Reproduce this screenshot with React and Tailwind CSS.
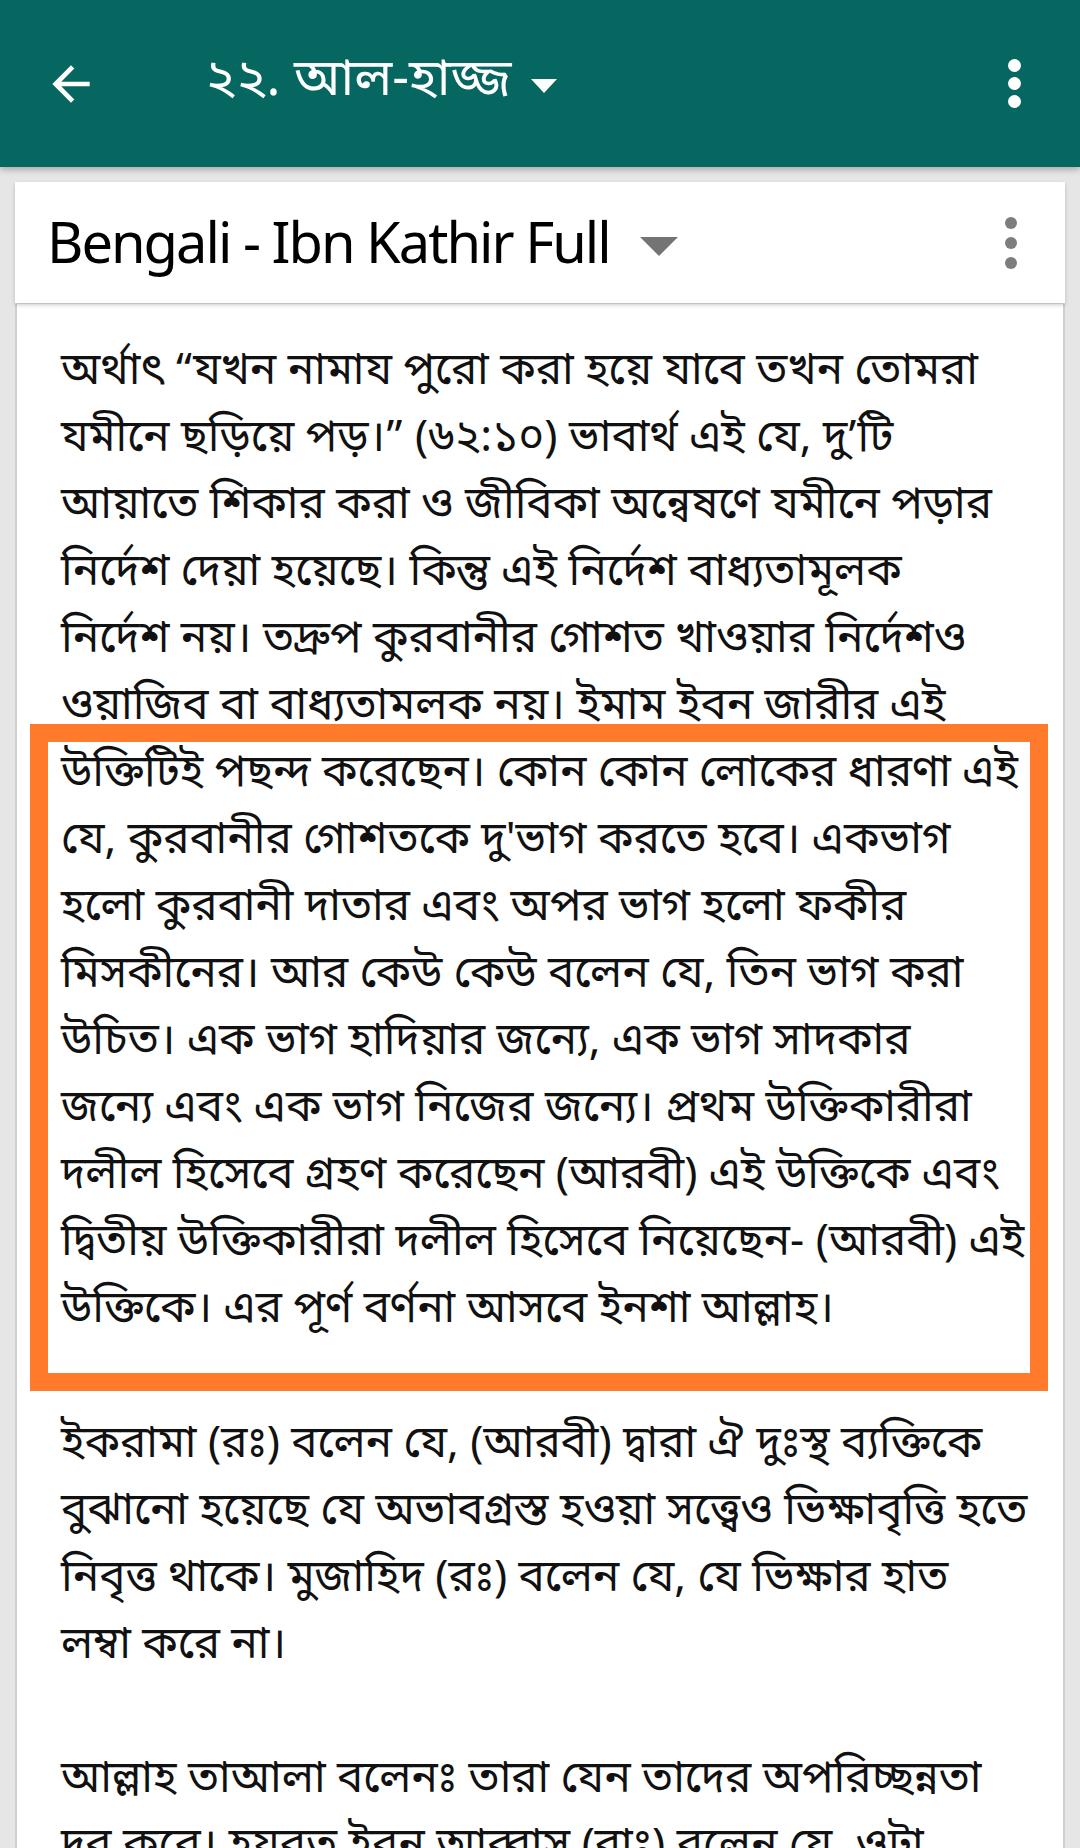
import React from 'react';

const bn = { fontFamily: '"Noto Sans Bengali", "Noto Serif Bengali", "Lohit Bengali", "FreeSerif", "FreeSans", sans-serif' };

const para1 = [
  'অর্থাৎ “যখন নামায পুরো করা হয়ে যাবে তখন তোমরা',
  'যমীনে ছড়িয়ে পড়।” (৬২:১০) ভাবার্থ এই যে, দু’টি',
  'আয়াতে শিকার করা ও জীবিকা অন্বেষণে যমীনে পড়ার',
  'নির্দেশ দেয়া হয়েছে। কিন্তু এই নির্দেশ বাধ্যতামূলক',
  'নির্দেশ নয়। তদ্রুপ কুরবানীর গোশত খাওয়ার নির্দেশও',
  'ওয়াজিব বা বাধ্যতামলক নয়। ইমাম ইবন জারীর এই',
];

const boxed = [
  'উক্তিটিই পছন্দ করেছেন। কোন কোন লোকের ধারণা এই',
  "যে, কুরবানীর গোশতকে দু'ভাগ করতে হবে। একভাগ",
  'হলো কুরবানী দাতার এবং অপর ভাগ হলো ফকীর',
  'মিসকীনের। আর কেউ কেউ বলেন যে, তিন ভাগ করা',
  'উচিত। এক ভাগ হাদিয়ার জন্যে, এক ভাগ সাদকার',
  'জন্যে এবং এক ভাগ নিজের জন্যে। প্রথম উক্তিকারীরা',
  'দলীল হিসেবে গ্রহণ করেছেন (আরবী) এই উক্তিকে এবং',
  'দ্বিতীয় উক্তিকারীরা দলীল হিসেবে নিয়েছেন- (আরবী) এই',
  'উক্তিকে। এর পূর্ণ বর্ণনা আসবে ইনশা আল্লাহ।',
];

const para2 = [
  'ইকরামা (রঃ) বলেন যে, (আরবী) দ্বারা ঐ দুঃস্থ ব্যক্তিকে',
  'বুঝানো হয়েছে যে অভাবগ্রস্ত হওয়া সত্ত্বেও ভিক্ষাবৃত্তি হতে',
  'নিবৃত্ত থাকে। মুজাহিদ (রঃ) বলেন যে, যে ভিক্ষার হাত',
  'লম্বা করে না।',
];

const para3 = [
  'আল্লাহ তাআলা বলেনঃ তারা যেন তাদের অপরিচ্ছন্নতা',
  'দূর করে। হযরত ইবন আব্বাস (রাঃ) বলেন যে, ওটা',
];

const Line = ({ children }) => (
  <div className="h-[67px] leading-[67px] whitespace-nowrap text-[44px] text-[#111]" style={bn}>
    {children}
  </div>
);

const Dots = ({ color, size, gap }) => (
  <div className={`flex flex-col items-center ${gap}`}>
    <span className={`${size} rounded-full ${color}`} />
    <span className={`${size} rounded-full ${color}`} />
    <span className={`${size} rounded-full ${color}`} />
  </div>
);

export default function App() {
  return (
    <div className="w-[1080px] h-[1848px] overflow-hidden bg-[#e6e6e6]">
      <header className="relative z-10 h-[167px] bg-[#05675f] flex items-center shadow-[0_3px_6px_rgba(0,0,0,0.25)]">
        <svg className="ml-[43px]" width="56" height="56" viewBox="0 0 24 24" fill="#fff">
          <path d="M20 11H7.83l5.59-5.59L12 4l-8 8 8 8 1.41-1.41L7.83 13H20v-2z" />
        </svg>
        <div className="ml-[106px] flex items-center">
          <span className="text-[52px] leading-none text-white pb-[4px]" style={bn}>২২. আল-হাজ্জ</span>
          <svg className="ml-[20px] mt-[4px]" width="26" height="14" viewBox="0 0 26 14" fill="#fff">
            <path d="M0 0h26L13 14z" />
          </svg>
        </div>
        <div className="ml-auto mr-[59px]">
          <Dots color="bg-white" size="w-[13px] h-[13px]" gap="gap-[5px]" />
        </div>
      </header>

      <main className="px-[15px] pt-[15px]">
        <div className="relative z-[5] h-[121px] bg-white flex items-center shadow-[0_2px_4px_rgba(0,0,0,0.2)]">
          <span
            className="ml-[32px] text-[56px] leading-none tracking-[-2px] text-black pb-[4px]"
            style={{ fontFamily: '"Noto Sans", "Open Sans", sans-serif' }}
          >
            Bengali - Ibn Kathir Full
          </span>
          <svg className="ml-[30px] mt-[8px]" width="38" height="19" viewBox="0 0 38 19" fill="#747474">
            <path d="M0 0h38L19 19z" />
          </svg>
          <div className="ml-auto mr-[48px]">
            <Dots color="bg-[#7d7d7d]" size="w-[12px] h-[12px]" gap="gap-[8px]" />
          </div>
        </div>

        <div className="mt-[1px] bg-white border-x-2 border-[#cfcfcf] h-[1600px] pt-[36px]">
          <div className="px-[44px]">
            {para1.map((t, i) => (
              <Line key={i}>{t}</Line>
            ))}
          </div>
          <div className="relative ml-[13px] mr-[15px] -mt-[18px] border-[18px] border-[#ff7a2a] bg-white pl-[13px] pb-[28px]">
            {boxed.map((t, i) => (
              <Line key={i}>{t}</Line>
            ))}
          </div>
          <div className="px-[44px] mt-[22px]">
            {para2.map((t, i) => (
              <Line key={i}>{t}</Line>
            ))}
            <div className="h-[67px]" />
            {para3.map((t, i) => (
              <Line key={i}>{t}</Line>
            ))}
          </div>
        </div>
      </main>
    </div>
  );
}
